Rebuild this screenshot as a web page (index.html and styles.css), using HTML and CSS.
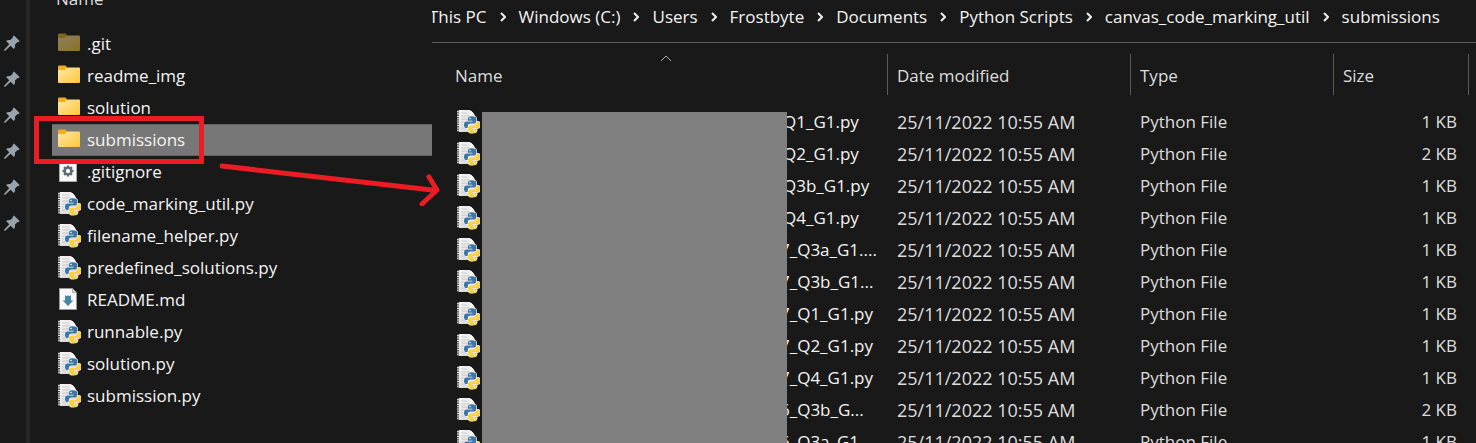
FILE: index.html
```
<!DOCTYPE html>
<html lang="en">
<head>
<meta charset="utf-8">
<title>submissions</title>
<link rel="stylesheet" href="styles.css">
</head>
<body>
<svg class="sprite" aria-hidden="true">
  <defs>
    <linearGradient id="gold" x1="0" y1="0" x2="1" y2="1">
      <stop offset="0" stop-color="#ffe9a6"/><stop offset="1" stop-color="#fdc738"/>
    </linearGradient>
    <linearGradient id="paper" x1="0" y1="0" x2="1" y2="1">
      <stop offset="0" stop-color="#fafafa"/><stop offset="1" stop-color="#cfcfcf"/>
    </linearGradient>
  </defs>
  <symbol id="folder" viewBox="0 0 24 24">
    <path d="M1 2.500q0-1 1-1h6q.8 0 1.200.8L10 4v3H1z" fill="#efb01f"/>
    <path d="M1 6h7l2-2.500h12q1 0 1 1V18q0 1-1 1H2q-1 0-1-1z" fill="url(#gold)"/>
  </symbol>
  <symbol id="python" viewBox="0 1 24 24">
    <path d="M1 1h12q5 1.500 6.500 8v14H1z" fill="url(#paper)"/>
    <path d="M12.500 1q5.500 1.500 7 8-3-2.500-5-2.500-.2-3.500-2-5.500z" fill="#fff"/>
    <path d="M2 1v22" stroke="#4a4a4a" stroke-width="2" stroke-dasharray="1.300 1"/>
    <path d="M5 4h6M5 7h8M5 10h8M5 13h4M5 16h4M5 19h4" stroke="#c3c3c3" stroke-width=".8"/>
    <g stroke="#f4f4f4" stroke-width="1.200" paint-order="stroke">
      <path fill="#3c76aa" d="M16.200 7.200c-3.600 0-4.400 1.300-4.400 2.700v1.800h4.700v.7h-6.300C8.500 12.400 8 14 8 15.700c0 2 .7 3.400 2.300 3.400h1.600v-2.200c0-1.500 1.300-2.300 2.600-2.300h3.900c1.200 0 2-.8 2-2V9.900c0-1.800-1.600-2.700-4.200-2.700z"/>
      <path fill="#fbd13f" d="M16.300 24c3.600 0 4.500-1.300 4.500-2.700v-1.500h-4.600v-.7h5.700c1.700 0 2.100-1.600 2.100-3.200 0-2-.6-3.400-2.200-3.400h-1.300v1.700c0 1.500-1.200 2.300-2.500 2.300h-3.800c-1.200 0-2 .9-2 2.100v2.600c0 1.800 1.500 2.800 4.100 2.800z"/>
    </g>
    <circle cx="14" cy="9.500" r=".8" fill="#fff"/><circle cx="18.400" cy="21.600" r=".8" fill="#fff"/>
  </symbol>
  <symbol id="config" viewBox="1 1 24 24">
    <path d="M3.500 1.500h17v21h-17z" fill="#f8f8f8" stroke="#aaa"/>
    <path d="M12 6.500v11M6.500 12h11M8.100 8.100l7.800 7.800M15.900 8.100l-7.800 7.800" stroke="#566873" stroke-width="2.400"/>
    <circle cx="12" cy="12" r="3.200" fill="#f8f8f8" stroke="#566873" stroke-width="2"/>
  </symbol>
  <symbol id="markdown" viewBox="1 1 24 24">
    <path d="M3.500 1.500h13l4 4v17h-17z" fill="#f8f8f8" stroke="#999"/>
    <path d="M16.500 1.500v4h4z" fill="#ddd" stroke="#999" stroke-width=".8"/>
    <path d="M9 8l1.600 1.200L12 8.300l1.400.9L15 8v5.500h2.300L12 19l-5.300-5.500H9z" fill="#4585a5"/>
  </symbol>
  <symbol id="pin" viewBox="0 0 16 16">
    <path d="M10 .4 15.600 6l-1.100 1.200-1-.1-2.600 2.700c.4 1.600.1 3-1 4.100L6.600 10.700 1.300 15.800H.2v-1.100l5-5.400L2.100 6.100c1.100-1.100 2.600-1.400 4.100-1L8.900 2.500l-.1-1z" fill="#98a3ab"/>
  </symbol>
  <symbol id="chevron" viewBox="0 0 6 10">
    <path d="M1 1l4 4-4 4" fill="none" stroke="#eee" stroke-width="2"/>
  </symbol>
</svg>
<div class="explorer">
  <aside class="tree">
    <div class="pins" aria-hidden="true">
      <svg><use href="#pin"/></svg><svg><use href="#pin"/></svg><svg><use href="#pin"/></svg>
      <svg><use href="#pin"/></svg><svg><use href="#pin"/></svg><svg><use href="#pin"/></svg>
    </div>
    <div class="folder-view">
      <div class="tree-head"><span>Name</span></div>
      <ul class="files">
        <li class="file hidden-item"><svg class="icon"><use href="#folder"/></svg>.git</li>
        <li class="file"><svg class="icon"><use href="#folder"/></svg>readme_img</li>
        <li class="file"><svg class="icon"><use href="#folder"/></svg>solution</li>
        <li class="file selected"><svg class="icon"><use href="#folder"/></svg>submissions</li>
        <li class="file"><svg class="icon"><use href="#config"/></svg>.gitignore</li>
        <li class="file"><svg class="icon"><use href="#python"/></svg>code_marking_util.py</li>
        <li class="file"><svg class="icon"><use href="#python"/></svg>filename_helper.py</li>
        <li class="file"><svg class="icon"><use href="#python"/></svg>predefined_solutions.py</li>
        <li class="file"><svg class="icon"><use href="#markdown"/></svg>README.md</li>
        <li class="file"><svg class="icon"><use href="#python"/></svg>runnable.py</li>
        <li class="file"><svg class="icon"><use href="#python"/></svg>solution.py</li>
        <li class="file"><svg class="icon"><use href="#python"/></svg>submission.py</li>
      </ul>
    </div>
  </aside>
  <main class="content">
    <nav class="crumbs" aria-label="Path">
      <a href="#">This PC</a><svg><use href="#chevron"/></svg>
      <a href="#">Windows (C:)</a><svg><use href="#chevron"/></svg>
      <a href="#">Users</a><svg><use href="#chevron"/></svg>
      <a href="#">Frostbyte</a><svg><use href="#chevron"/></svg>
      <a href="#">Documents</a><svg><use href="#chevron"/></svg>
      <a href="#">Python Scripts</a><svg><use href="#chevron"/></svg>
      <a href="#">canvas_code_marking_util</a><svg><use href="#chevron"/></svg>
      <a href="#">submissions</a>
    </nav>
    <table class="listing">
      <colgroup><col><col class="c-date"><col class="c-type"><col class="c-size"><col class="c-end"></colgroup>
      <thead>
        <tr>
          <th scope="col"><button class="head">Name</button><svg class="sort" viewBox="0 0 12 7"><path d="M1 6l5-5 5 5" fill="none" stroke="#aaa"/></svg></th>
          <th scope="col"><button class="head">Date modified</button></th>
          <th scope="col"><button class="head">Type</button></th>
          <th scope="col"><button class="head">Size</button></th>
          <td></td>
        </tr>
      </thead>
      <tbody>
        <tr><td><div class="name"><svg class="icon"><use href="#python"/></svg><span class="short">Q1_G1.py</span></div></td><td class="date">25/11/2022 10:55 AM</td><td>Python File</td><td class="size">1 KB</td><td></td></tr>
        <tr><td><div class="name"><svg class="icon"><use href="#python"/></svg><span class="short">Q2_G1.py</span></div></td><td class="date">25/11/2022 10:55 AM</td><td>Python File</td><td class="size">2 KB</td><td></td></tr>
        <tr><td><div class="name"><svg class="icon"><use href="#python"/></svg><span class="short">Q3b_G1.py</span></div></td><td class="date">25/11/2022 10:55 AM</td><td>Python File</td><td class="size">1 KB</td><td></td></tr>
        <tr><td><div class="name"><svg class="icon"><use href="#python"/></svg><span class="short">Q4_G1.py</span></div></td><td class="date">25/11/2022 10:55 AM</td><td>Python File</td><td class="size">1 KB</td><td></td></tr>
        <tr><td><div class="name"><svg class="icon"><use href="#python"/></svg><span>7_Q3a_G1....</span></div></td><td class="date">25/11/2022 10:55 AM</td><td>Python File</td><td class="size">1 KB</td><td></td></tr>
        <tr><td><div class="name"><svg class="icon"><use href="#python"/></svg><span>7_Q3b_G1...</span></div></td><td class="date">25/11/2022 10:55 AM</td><td>Python File</td><td class="size">1 KB</td><td></td></tr>
        <tr><td><div class="name"><svg class="icon"><use href="#python"/></svg><span>7_Q1_G1.py</span></div></td><td class="date">25/11/2022 10:55 AM</td><td>Python File</td><td class="size">1 KB</td><td></td></tr>
        <tr><td><div class="name"><svg class="icon"><use href="#python"/></svg><span>7_Q2_G1.py</span></div></td><td class="date">25/11/2022 10:55 AM</td><td>Python File</td><td class="size">1 KB</td><td></td></tr>
        <tr><td><div class="name"><svg class="icon"><use href="#python"/></svg><span>7_Q4_G1.py</span></div></td><td class="date">25/11/2022 10:55 AM</td><td>Python File</td><td class="size">1 KB</td><td></td></tr>
        <tr><td><div class="name"><svg class="icon"><use href="#python"/></svg><span>6_Q3b_G...</span></div></td><td class="date">25/11/2022 10:55 AM</td><td>Python File</td><td class="size">2 KB</td><td></td></tr>
        <tr><td><div class="name"><svg class="icon"><use href="#python"/></svg><span>6_Q3a_G1....</span></div></td><td class="date">25/11/2022 10:55 AM</td><td>Python File</td><td class="size">1 KB</td><td></td></tr>
      </tbody>
    </table>
    <div class="mask"></div>
  </main>
  <div class="highlight"></div>
  <svg class="arrow" viewBox="0 0 230 50" aria-hidden="true">
    <path d="M8 11l210 24M215 22l8 13-15 14" fill="none" stroke="#ea1c24" stroke-width="5" stroke-linecap="round" stroke-linejoin="round"/>
  </svg>
</div>
</body>
</html>
```
FILE: styles.css
```
* { box-sizing: border-box; }
body {
  margin: 0;
  background: #191919;
  color: #f4f4f4;
  font: 17px/24px "Open Sans", "Noto Sans", sans-serif;
}
.sprite { position: absolute; width: 0; height: 0; }
.explorer {
  position: relative;
  display: flex;
  height: 100vh;
  overflow: hidden;
}
.icon { flex: none; width: 24px; height: 24px; }

.tree { display: flex; flex: none; width: 432px; }
.pins {
  display: flex;
  flex-direction: column;
  flex: none;
  gap: 20px;
  width: 30px;
  padding: 35px 0 0 4px;
  border-right: 4px solid #262626;
}
.pins svg { flex: none; width: 16px; height: 16px; }
.folder-view { flex: 1; padding-left: 22px; }
.tree-head { height: 28px; padding-left: 4px; overflow: hidden; color: #dedede; }
.tree-head span { display: block; margin-top: -13px; }
.files { margin: 0; padding: 0; list-style: none; }
.file {
  display: flex;
  align-items: center;
  gap: 6px;
  height: 32px;
  padding-left: 5px;
}
.selected { background: #777; border: solid #626262; border-width: 1px 0; }
.hidden-item .icon { opacity: .5; }

.content { position: relative; flex: 1; min-width: 0; overflow: hidden; }
.crumbs {
  display: flex;
  align-items: center;
  gap: 13px;
  height: 43px;
  padding-bottom: 8px;
  border-bottom: 1px solid #5a5a5a;
  white-space: nowrap;
}
.crumbs a { color: inherit; text-decoration: none; }
.crumbs a:first-child { margin-left: -3px; }
.crumbs svg { flex: none; width: 6px; height: 10px; }

.listing {
  width: 100%;
  border-collapse: collapse;
  table-layout: fixed;
  color: #dedede;
}
.c-date { width: 243px; }
.c-type { width: 203px; }
.c-size { width: 135px; }
.c-end { width: 7px; }
.listing thead tr { height: 63px; }
.listing th {
  position: relative;
  padding: 11px 0;
  font-weight: 400;
  text-align: left;
  vertical-align: top;
}
.head {
  display: block;
  width: 100%;
  height: 41px;
  padding: 2px 0 0 9px;
  border: 0;
  border-right: 1px solid #5a5a5a;
  background: none;
  color: inherit;
  font: inherit;
  text-align: left;
}
.listing th:first-child .head { padding-left: 23px; }
.sort { position: absolute; left: 50%; top: 12px; width: 12px; height: 7px; }
.listing tbody tr { height: 32px; }
.listing td { padding: 0 0 0 9px; white-space: nowrap; }
.listing td:first-child { padding-left: 24px; color: #f4f4f4; }
.listing .date { font-size: 18px; }
.listing .size { padding-right: 12px; text-align: right; }
.name { display: flex; align-items: center; gap: 300px; }
.name .short { padding-left: 3px; }
.mask {
  position: absolute;
  top: 112px;
  bottom: 0;
  left: 50px;
  width: 305px;
  background: #808080;
}
.highlight {
  position: absolute;
  left: 34px;
  top: 116px;
  width: 170px;
  height: 48px;
  border: 5px solid #ea1c24;
}
.arrow { position: absolute; left: 214px; top: 154px; width: 230px; height: 52px; }
```
